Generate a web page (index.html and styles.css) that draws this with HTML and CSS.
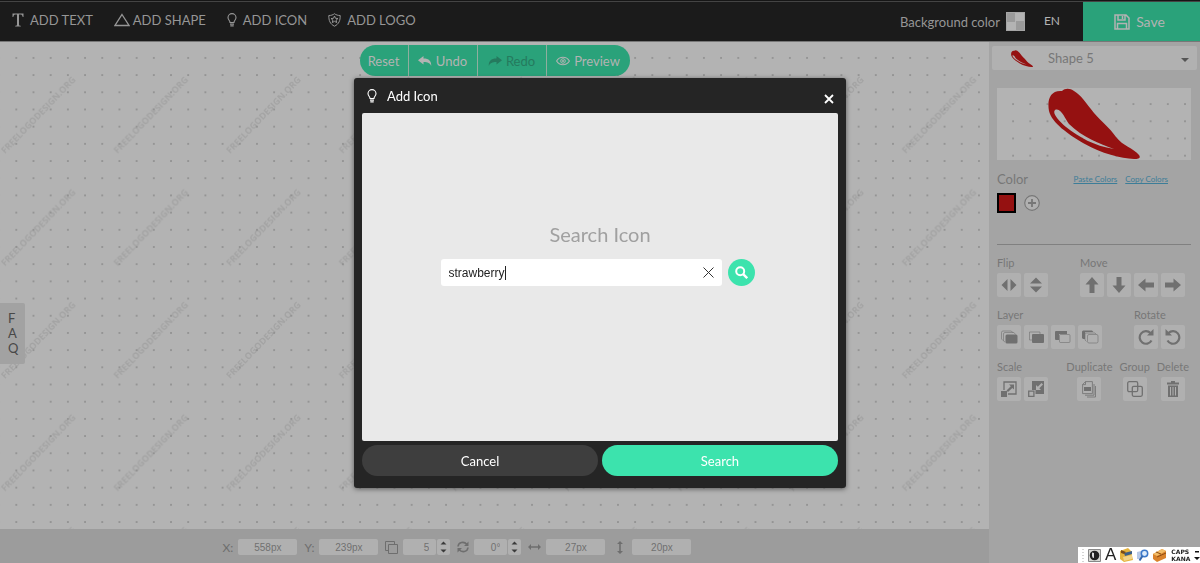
FILE: index.html
```
<!DOCTYPE html>
<html lang="en">
<head>
  <meta charset="UTF-8">
  <meta name="viewport" content="width=device-width, initial-scale=1.0">
  <title>Logo Editor</title>
  <link rel="stylesheet" href="styles.css">
</head>
<body>
  <!-- shared icons -->
  <svg class="defs" width="0" height="0" aria-hidden="true">
    <symbol id="bulb" viewBox="0 0 10 14">
      <path d="M3 9.500C3 7.500 1 7 1 4.600a4 4 0 0 1 8 0C9 7 7 7.500 7 9.500z" fill="none" stroke="currentColor" stroke-width="1.100"/>
      <path d="M3 11.200h4M3.300 12.800h3.400" stroke="currentColor" stroke-width="1.300"/>
    </symbol>
    <symbol id="pepper" viewBox="0 0 92 71">
      <path fill="#951111" fill-rule="evenodd" d="M14 3C17 0 22 0 26 3C33 7 38 15 46 25C54 34 61 39 68 49C75 58 85 60 91 67C93 70 91 71 86 71C73 70 54 66 35 55C20 46 4 35 1 23C-1 12 2 2 14 3zM7 22C4 25 10 32 18 39C31 49 46 58 66 61C52 56 34 49 21 36C17 31 13 19 7 22z"/>
    </symbol>
    <symbol id="arrow" viewBox="0 0 16 16">
      <path fill="currentColor" d="M8 0l6.500 7.500h-4V16h-5V7.500h-4z"/>
    </symbol>
    <symbol id="turn" viewBox="0 0 16 16">
      <path d="M13.500 11.500A6.300 6.300 0 1 1 12.500 4" fill="none" stroke="currentColor" stroke-width="2.200"/>
      <path fill="currentColor" d="M15.500 0v6.500H9z"/>
    </symbol>
    <symbol id="reply" viewBox="0 0 14 10">
      <path fill="currentColor" d="M0 4.200L5.500 0v2.500C11 2.500 13.500 5 13.200 10C12 7 10 6 5.500 6v2.600z"/>
    </symbol>
  </svg>

  <header class="topbar">
    <nav class="add-menu">
      <a href="#text"><svg width="12" height="14" viewBox="0 0 12 14"><path fill="currentColor" d="M.500.500h11v3.500h-.800C10.300 2 9.600 1.500 8.300 1.500H7v10c0 1 .4 1.200 1.800 1.300v.7H3.200v-.7C4.600 12.700 5 12.500 5 11.500v-10H3.700C2.400 1.500 1.700 2 1.300 4H.5z"/></svg>ADD TEXT</a>
      <a href="#shape" class="shape-link"><svg width="16" height="14" viewBox="0 0 16 14"><path d="M8 1.500L15 12.500H1z" fill="none" stroke="currentColor" stroke-width="1.300"/></svg>ADD SHAPE</a>
      <a href="#icon"><svg width="10" height="14"><use href="#bulb"/></svg>ADD ICON</a>
      <a href="#logo"><svg width="13" height="14" viewBox="0 0 13 14"><path d="M6.500.700C5 2 3 2.500.800 2.500C.700 7.500 2 11 6.500 13.200C11 11 12.300 7.500 12.200 2.500C10 2.500 8 2 6.500.700z" fill="none" stroke="currentColor"/><path d="M6.500 3l1 2.300 2.500.2-1.900 1.600.6 2.500-2.200-1.300-2.200 1.300.6-2.500L3 5.500l2.500-.2z" fill="none" stroke="currentColor"/></svg>ADD LOGO</a>
    </nav>
    <div class="top-right">
      <label for="bgColor">Background color</label>
      <button class="bg-swatch" id="bgColor" aria-label="Background color"></button>
      <a href="#lang" class="lang">EN</a>
      <button class="save-btn"><svg width="16" height="16" viewBox="0 0 16 16"><path d="M1 1h11l3 3v11H1zM4 1v5h7V1M3.500 15V9.500h9V15M8.500 2v3" fill="none" stroke="currentColor" stroke-width="1.500"/></svg>Save</button>
    </div>
  </header>

  <main class="editor">
    <section class="workspace">
      <div class="canvas">
        <svg class="grid" width="100%" height="100%" aria-hidden="true">
          <pattern id="dots" x="7.700" y="7.300" width="17.190" height="17.190" patternUnits="userSpaceOnUse">
            <circle cx="8.600" cy="8.600" r="1" fill="#8c8c8c"/>
          </pattern>
          <pattern id="marks" x="-10" y="25" width="112.600" height="112.600" patternUnits="userSpaceOnUse">
            <text class="mark" transform="translate(15 87) rotate(-46)">FREELOGODESIGN.ORG</text>
          </pattern>
          <rect width="100%" height="100%" fill="url(#marks)"/>
          <rect width="100%" height="100%" fill="url(#dots)"/>
        </svg>
        <div class="history">
          <button>Reset</button>
          <button><svg width="14" height="10"><use href="#reply"/></svg>Undo</button>
          <button disabled><svg class="mirror" width="14" height="10"><use href="#reply"/></svg>Redo</button>
          <button><svg width="14" height="10" viewBox="0 0 14 10"><path d="M.600 5C3.500 0 10.500 0 13.400 5C10.500 10 3.500 10 .600 5z" fill="none" stroke="currentColor" stroke-width="1.100"/><circle cx="7" cy="5" r="2.300" fill="none" stroke="currentColor"/><circle cx="7" cy="5" r="1" fill="currentColor"/></svg>Preview</button>
        </div>
        <a href="#faq" class="faq"><span>F</span><span>A</span><span>Q</span></a>
      </div>

      <form class="position-bar">
        <label for="posX">X:</label>
        <input type="text" id="posX" value="558px">
        <label for="posY">Y:</label>
        <input type="text" id="posY" value="239px">
        <label for="corner" aria-label="Layer order"><svg width="13" height="13" viewBox="0 0 13 13"><path d="M3.500 3.500h9v9h-9zM3 9.500H.500v-9h9V3" fill="none" stroke="currentColor"/></svg></label>
        <span class="stepper">
          <input type="text" id="corner" value="5">
          <svg width="13" height="16" viewBox="0 0 13 16"><path fill="#3a3a3a" d="M6.500 2.500l3 3h-6zM6.500 13.500l-3-3h6z"/></svg>
        </span>
        <label for="angle" aria-label="Angle"><svg width="12" height="12" viewBox="0 0 12 12"><path d="M1 5.500C1.500 1 7 0 10 3.500M11 6.500C10.500 11 5 12 2 8.500" fill="none" stroke="currentColor" stroke-width="1.600"/><path fill="currentColor" d="M11.500.500v4.500H7zM.500 11.500V7H5z"/></svg></label>
        <span class="stepper">
          <input type="text" id="angle" value="0°">
          <svg width="13" height="16" viewBox="0 0 13 16"><path fill="#3a3a3a" d="M6.500 2.500l3 3h-6zM6.500 13.500l-3-3h6z"/></svg>
        </span>
        <label for="sizeW" aria-label="Width"><svg width="13" height="6" viewBox="0 0 13 6"><path fill="currentColor" d="M0 3l3-3v2.200h7V0l3 3-3 3V3.800H3V6z"/></svg></label>
        <input type="text" id="sizeW" value="27px">
        <label for="sizeH" class="height-label" aria-label="Height"><svg width="6" height="13" viewBox="0 0 6 13"><path fill="currentColor" d="M3 0l3 3H3.800v7H6l-3 3-3-3h2.200V3H0z"/></svg></label>
        <input type="text" id="sizeH" value="20px">
      </form>
    </section>

    <aside class="panel">
      <div class="shape-picker">
        <svg class="thumb" width="22" height="17"><use href="#pepper"/></svg>
        <select aria-label="Shape">
          <option>Shape 5</option>
        </select>
        <svg class="caret" width="8" height="4" viewBox="0 0 8 4"><path fill="#555" d="M0 0h8L4 4z"/></svg>
      </div>

      <div class="panel-body">
        <div class="preview">
          <svg width="100%" height="72" aria-hidden="true">
            <pattern id="previewDots" x="7.500" y="7.500" width="17.190" height="17.190" patternUnits="userSpaceOnUse">
              <circle cx="8.600" cy="8.600" r="1" fill="#8c8c8c"/>
            </pattern>
            <rect width="100%" height="100%" fill="url(#previewDots)"/>
            <use href="#pepper" x="51" y="0" width="92" height="71"/>
          </svg>
        </div>

        <div class="color-head">
          <h2>Color</h2>
          <a href="#paste">Paste Colors</a>
          <a href="#copy">Copy Colors</a>
        </div>
        <div class="swatches">
          <button class="swatch" aria-label="Red"></button>
          <button class="add-color" aria-label="Add color"><svg width="16" height="16" viewBox="0 0 16 16"><circle cx="8" cy="8" r="7.300" fill="none" stroke="currentColor" stroke-width="1.200"/><path d="M8 4v8M4 8h8" stroke="currentColor" stroke-width="1.800"/></svg></button>
        </div>
        <hr>

        <div class="tool-row">
          <div class="tools">
            <h3>Flip</h3>
            <div class="tool-buttons">
              <button aria-label="Flip horizontal"><svg width="16" height="16" viewBox="0 0 16 16"><path fill="currentColor" d="M6.500 2v12L.500 8zM9.500 2v12l6-6z"/></svg></button>
              <button aria-label="Flip vertical"><svg width="16" height="16" viewBox="0 0 16 16"><path fill="currentColor" d="M2 6.500h12L8 .500zM2 9.500h12l-6 6z"/></svg></button>
            </div>
          </div>
          <div class="tools">
            <h3>Move</h3>
            <div class="tool-buttons">
              <button aria-label="Move up"><svg width="16" height="16"><use href="#arrow"/></svg></button>
              <button aria-label="Move down"><svg class="down" width="16" height="16"><use href="#arrow"/></svg></button>
              <button aria-label="Move left"><svg class="left" width="16" height="16"><use href="#arrow"/></svg></button>
              <button aria-label="Move right"><svg class="right" width="16" height="16"><use href="#arrow"/></svg></button>
            </div>
          </div>
        </div>

        <div class="tool-row">
          <div class="tools">
            <h3>Layer</h3>
            <div class="tool-buttons">
              <button aria-label="Bring to front"><svg width="18" height="14" viewBox="0 0 18 14"><path d="M3 10.500L1.500 9V2.500Q1.500 1 3 1h8l2 1.500M5 12l-1.500-1V4Q3.500 2.500 5 2.500h9l1.500 2" fill="none" stroke="currentColor" stroke-width=".6"/><rect x="5.500" y="4.500" width="12" height="9" rx="1.500" fill="currentColor"/></svg></button>
              <button aria-label="Bring forward"><svg width="16" height="12" viewBox="0 0 16 12"><path d="M4 9H1.500V1H12v2" fill="none" stroke="currentColor" stroke-width=".6"/><rect x="4" y="3" width="12" height="9" rx="1" fill="currentColor"/></svg></button>
              <button aria-label="Send backward"><svg width="16" height="12" viewBox="0 0 16 12"><path fill="currentColor" d="M0 1Q0 0 1 0h11v3H4v6H1Q0 9 0 8z"/><rect x="4.500" y="3.500" width="10.500" height="8" rx="1" fill="none" stroke="currentColor" stroke-width=".6"/></svg></button>
              <button aria-label="Send to back"><svg width="18" height="14" viewBox="0 0 18 14"><path fill="currentColor" d="M1 1.500L2 .500h9l1.500 1.500H4v7H2L1 8z"/><path d="M5.500 11.500L4 10V3h10l1.500 1.500" fill="none" stroke="currentColor" stroke-width=".6"/><rect x="6.500" y="4.500" width="10.500" height="8.500" rx="1.500" fill="none" stroke="currentColor" stroke-width=".6"/></svg></button>
            </div>
          </div>
          <div class="tools">
            <h3>Rotate</h3>
            <div class="tool-buttons">
              <button aria-label="Rotate right"><svg width="16" height="16"><use href="#turn"/></svg></button>
              <button aria-label="Rotate left"><svg class="mirror" width="16" height="16"><use href="#turn"/></svg></button>
            </div>
          </div>
        </div>

        <div class="tool-row last">
          <div class="tools">
            <h3>Scale</h3>
            <div class="tool-buttons">
              <button aria-label="Scale up"><svg width="16" height="16" viewBox="0 0 16 16"><path d="M3 9V1h12v12H7" fill="none" stroke="currentColor" stroke-width="1.300"/><path fill="currentColor" d="M0 10h6v6H0zM8 3.500h5v5L11.300 7 7 11 5.500 9.500l4.300-4.300z"/></svg></button>
              <button aria-label="Scale down"><svg width="16" height="16" viewBox="0 0 16 16"><path fill="currentColor" fill-rule="evenodd" d="M4 0h12v13H7.500V9H4zM13.500 2L9.800 5.700 8 4v5h5l-1.700-1.700L15 3.500z"/><path d="M.700 10.200h5.200v5.200H.700z" fill="none" stroke="currentColor" stroke-width="1.300"/></svg></button>
            </div>
          </div>
          <div class="tools centered push">
            <h3>Duplicate</h3>
            <button aria-label="Duplicate"><svg width="14" height="17" viewBox="0 0 14 17"><path d="M3.500.600h6.900v12H.600V3.500zM3.500.600v3H.600M12 3v11.200H3M13.500 5v11H5" fill="none" stroke="currentColor" stroke-width=".8"/><path fill="currentColor" d="M2 6h7v4H2z"/></svg></button>
          </div>
          <div class="tools centered">
            <h3>Group</h3>
            <button aria-label="Group"><svg width="16" height="16" viewBox="0 0 16 16"><rect x=".700" y=".700" width="10" height="10" rx="1.500" fill="none" stroke="currentColor" stroke-width="1.300"/><rect x="5.300" y="5.300" width="10" height="10" rx="1.500" fill="none" stroke="currentColor" stroke-width="1.300"/></svg></button>
          </div>
          <div class="tools centered">
            <h3>Delete</h3>
            <button aria-label="Delete"><svg width="12" height="16" viewBox="0 0 12 16"><path fill="currentColor" fill-rule="evenodd" d="M4 1.500V0h4v1.500h4v2H0v-2zM1 4.500h10V16H1zM3 6v8.500h1V6zm2.500 0v8.500h1V6zM8 6v8.500h1V6z"/></svg></button>
          </div>
        </div>
      </div>
    </aside>
  </main>

  <div class="overlay">
    <form class="dialog" role="dialog" aria-labelledby="dialogTitle">
      <div class="dialog-head">
        <svg width="10" height="14"><use href="#bulb"/></svg>
        <h1 id="dialogTitle">Add Icon</h1>
        <button type="button" class="close-btn" aria-label="Close"><svg width="10" height="10" viewBox="0 0 10 10"><path d="M1 1l8 8M9 1L1 9" stroke="currentColor" stroke-width="1.800"/></svg></button>
      </div>
      <div class="dialog-body">
        <label for="iconSearch">Search Icon</label>
        <div class="search-line">
          <div class="search-field">
            <input type="text" id="iconSearch" value="strawberry" autofocus>
            <span class="text-caret"></span>
            <button type="button" class="clear-btn" aria-label="Clear"><svg width="11" height="11" viewBox="0 0 11 11"><path d="M.500.500l10 10M10.500.500l-10 10" stroke="currentColor"/></svg></button>
          </div>
          <button type="submit" class="go-btn" aria-label="Search icons"><svg width="13" height="13" viewBox="0 0 13 13"><circle cx="5.200" cy="5.200" r="4" fill="none" stroke="currentColor" stroke-width="2"/><path d="M8.200 8.200l4 4" stroke="currentColor" stroke-width="2.400"/></svg></button>
        </div>
      </div>
      <div class="dialog-actions">
        <button type="button" class="cancel-btn">Cancel</button>
        <button type="submit" class="search-btn">Search</button>
      </div>
    </form>
  </div>

  <!-- language bar -->
  <div class="ime-bar">
    <svg class="grip" width="2" height="14" viewBox="0 0 2 14"><path d="M1 1v13" stroke="#aaa" stroke-dasharray="1 2"/></svg>
    <svg width="13" height="13" viewBox="0 0 13 13"><path fill="#d8d8d4" stroke="#888" d="M.500.500h12v12H.500z"/><circle cx="6.500" cy="6.500" r="4.800" fill="#222"/><path d="M4 3.500v3Q4 9 6 9V4z" fill="#ddd"/></svg>
    <span class="ime-mode">A</span>
    <svg width="13" height="14" viewBox="0 0 13 14"><path fill="#e5b33c" d="M0 3l8-3 3 3 2 9-9 2-4-3z"/><path fill="#3b5f87" d="M4 5l8-2v3L5 8z"/><path fill="#7a4d19" d="M1 2l5 2-2 2-3-1z"/><path fill="#f2d488" d="M3 9l9-2v4l-8 2z"/></svg>
    <svg width="12" height="13" viewBox="0 0 12 13"><path fill="#b8c9e4" d="M0 3l4-1v8H0z"/><circle cx="7.500" cy="4.500" r="3.200" fill="#dcebfa" stroke="#3b78c9" stroke-width="1.500"/><path d="M5.500 7l-3 4.500" stroke="#3266ad" stroke-width="2"/></svg>
    <svg width="14" height="14" viewBox="0 0 14 14"><path fill="#d9822b" d="M0 6l9-5 4 2v7l-9 4-4-3z"/><path fill="#f3bd67" d="M0 6l9-5 4 2-9 5z"/><path d="M4 9l9-4M3 4l5 2" stroke="#8d4c12"/></svg>
    <span class="ime-keys"><span>CAPS</span><span>KANA</span></span>
    <svg width="6" height="12" viewBox="0 0 6 12"><path fill="#111" d="M1 2h4v1.500H1zM0 8h6l-3 3z"/></svg>
  </div>

  <script>
    document.querySelector('.clear-btn').addEventListener('click', () => {
      const search = document.getElementById('iconSearch');
      search.value = '';
      search.focus();
    });
  </script>
</body>
</html>
```
FILE: styles.css
```
* {
  box-sizing: border-box;
}

body {
  margin: 0;
  height: 100vh;
  display: flex;
  flex-direction: column;
  overflow: hidden;
  font-family: Lato, 'Liberation Sans', sans-serif;
  font-size: 13px;
  background: #b3b3b3;
}

svg {
  display: block;
  flex: none;
}

.defs {
  position: absolute;
}

button,
input,
select {
  font-family: inherit;
  font-size: inherit;
  border: none;
  margin: 0;
  padding: 0;
}

button {
  cursor: pointer;
}

h1,
h2,
h3 {
  margin: 0;
  font-weight: normal;
}

.mirror {
  transform: scaleX(-1);
}

/* Top bar */
.topbar {
  display: flex;
  justify-content: space-between;
  flex: none;
  height: 41px;
  margin-top: 1px;
  border-top: 1px solid #444;
  border-bottom: 1px solid #777;
  background: #1b1b1b;
  color: #969696;
  box-shadow: 0 -1px #161616;
}

.add-menu {
  display: flex;
  align-items: center;
  gap: 21px;
  padding: 0 12px 3px;
}

.add-menu a {
  display: flex;
  align-items: center;
  gap: 6px;
  color: inherit;
  text-decoration: none;
}

.add-menu .shape-link {
  gap: 3px;
}

.top-right {
  display: flex;
  align-items: center;
}

.bg-swatch {
  width: 19px;
  height: 19px;
  margin: 0 19px 0 6px;
  border: 1px solid #a5a5a5;
  background: conic-gradient(#b3b3b3 25%, #9a9a9a 0 50%, #b3b3b3 0 75%, #9a9a9a 0);
}

.lang {
  margin-right: 23px;
  padding-bottom: 3px;
  font-size: 12px;
  color: #b3b3b3;
  text-decoration: none;
}

.save-btn {
  display: flex;
  align-items: center;
  justify-content: center;
  gap: 6px;
  align-self: stretch;
  width: 117px;
  padding-right: 4px;
  background: #2aa27a;
  color: #b3b3b3;
  font-size: 14px;
}

/* Editor */
.editor {
  display: flex;
  flex: 1;
  min-height: 0;
}

.workspace {
  flex: 1;
  display: flex;
  flex-direction: column;
}

.canvas {
  position: relative;
  flex: 1;
  padding-top: 3px;
}

.grid {
  position: absolute;
  inset: 0;
}

.mark {
  font-family: 'Open Sans', sans-serif;
  font-size: 9px;
  font-weight: 700;
  fill: #a3a3a3;
}

.history {
  position: relative;
  display: flex;
  width: max-content;
  height: 31px;
  margin: 0 auto;
  border-radius: 16px;
  overflow: hidden;
}

.history button {
  display: flex;
  align-items: center;
  justify-content: center;
  gap: 4px;
  width: 69px;
  background: #2aa27a;
  color: #b3b3b3;
  font-size: 13px;
}

.history button + button {
  border-left: 1px solid #8fae9f;
}

.history button:first-child {
  width: 48px;
}

.history button:last-child {
  width: 84px;
}

.history button:disabled {
  color: #257a5e;
}

.faq {
  position: absolute;
  left: 0;
  top: 261px;
  display: flex;
  flex-direction: column;
  width: 25px;
  padding: 8px;
  border-radius: 0 2px 2px 0;
  background: #a2a2a2;
  color: #484848;
  font-size: 13px;
  line-height: 15px;
  text-decoration: none;
}

/* Bottom bar */
.position-bar {
  display: flex;
  align-items: center;
  justify-content: center;
  gap: 5px;
  height: 34px;
  padding: 2px 77px 0 0;
  background: #9c9c9c;
  color: #6e6e6e;
  font-size: 12px;
}

.position-bar input {
  width: 59px;
  height: 16px;
  border-radius: 2px;
  background: #b0b0b0;
  color: #707070;
  font-family: 'Liberation Sans', Arial, sans-serif;
  font-size: 10px;
  text-align: center;
}

.position-bar label {
  margin-left: 2px;
}

.position-bar .height-label {
  margin: 0 4px 0 7px;
}

.stepper {
  display: flex;
  gap: 1px;
}

.position-bar .stepper input {
  width: 33px;
  padding-right: 7px;
  text-align: right;
}

.stepper svg {
  border-radius: 2px;
  background: #b0b0b0;
}

/* Side panel */
.panel {
  width: 211px;
  padding: 4px 3px;
  background: #a4a4a4;
  color: #777;
}

.shape-picker {
  position: relative;
}

.shape-picker select {
  appearance: none;
  display: block;
  width: 100%;
  height: 24px;
  padding-left: 56px;
  border-radius: 2px;
  background: #b1b1b1;
  color: #777;
  font-size: 13px;
}

.thumb {
  position: absolute;
  left: 19px;
  top: 4px;
}

.caret {
  position: absolute;
  right: 8px;
  top: 12px;
}

.panel-body {
  padding: 18px 6px 0 5px;
}

.preview {
  background: #b3b3b3;
}

.color-head {
  display: flex;
  align-items: center;
  gap: 8px;
  margin: 10px 23px 5px 0;
  line-height: 18px;
}

.color-head h2 {
  margin-right: auto;
  font-size: 13px;
}

.color-head a {
  font-size: 8px;
  color: #3c7d98;
}

.swatches {
  display: flex;
  align-items: center;
  gap: 8px;
}

.swatch {
  width: 19px;
  height: 20px;
  border: 2px solid #000;
  background: #951111;
}

.add-color {
  border-radius: 50%;
  background: #b0b0b0;
  color: #777;
}

.panel hr {
  margin: 31px 0 11px;
  border: none;
  border-top: 1px solid #808080;
}

.tool-row {
  display: flex;
  justify-content: space-between;
  margin-bottom: 11px;
  padding-right: 6px;
}

.tool-row.last {
  padding-right: 2px;
  gap: 7px;
}

.tools h3 {
  margin-bottom: 3px;
  font-size: 11px;
  line-height: 14px;
}

.tool-buttons {
  display: flex;
  gap: 3px;
}

.tools button {
  display: flex;
  align-items: center;
  justify-content: center;
  width: 24px;
  height: 24px;
  border-radius: 2px;
  background: #b0b0b0;
  color: #707070;
}

.centered {
  display: flex;
  flex-direction: column;
  align-items: center;
}

.push {
  margin-left: auto;
}

.down {
  transform: rotate(180deg);
}

.left {
  transform: rotate(-90deg);
}

.right {
  transform: rotate(90deg);
}

/* Dialog */
.overlay {
  position: fixed;
  inset: 0;
  display: flex;
  align-items: flex-start;
  justify-content: center;
  padding-top: 78px;
}

.dialog {
  width: 492px;
  max-width: 100%;
  padding: 0 8px 12px;
  border-radius: 3px;
  background: #252525;
  box-shadow: 0 1px 5px rgba(0, 0, 0, 0.5);
  color: #fff;
}

.dialog-head {
  display: flex;
  align-items: center;
  gap: 10px;
  height: 35px;
  padding: 0 4px 0 5px;
}

.dialog-head h1 {
  font-size: 13px;
}

.close-btn {
  margin-left: auto;
  padding-top: 6px;
  background: none;
  color: #fff;
}

.dialog-body {
  display: flex;
  flex-direction: column;
  align-items: center;
  height: 328px;
  padding-top: 108px;
  border-radius: 2px;
  background: #e9e9e9;
}

.dialog-body label {
  font-size: 20px;
  line-height: 26px;
  color: #a0a0a0;
}

.search-line {
  display: flex;
  gap: 6px;
  margin: 12px 5px 0 0;
}

.search-field {
  display: flex;
  align-items: center;
  width: 281px;
  height: 27px;
  padding: 0 8px;
  border-radius: 3px;
  background: #fff;
}

.search-field input {
  field-sizing: content;
  max-width: 240px;
  outline: none;
  background: none;
  caret-color: transparent;
  color: #222;
  font-family: 'Liberation Sans', Arial, sans-serif;
  font-size: 12px;
}

.text-caret {
  width: 1px;
  height: 14px;
  background: #222;
}

.clear-btn {
  margin-left: auto;
  background: none;
  color: #333;
}

.go-btn {
  display: flex;
  align-items: center;
  justify-content: center;
  width: 27px;
  height: 27px;
  border-radius: 50%;
  background: #3ce3ad;
  color: #fff;
}

.dialog-actions {
  display: flex;
  gap: 4px;
  margin-top: 4px;
}

.dialog-actions button {
  flex: 1;
  height: 31px;
  border-radius: 16px;
  color: #fff;
  font-size: 13px;
}

.dialog-actions .cancel-btn {
  background: #3e3e3e;
}

.dialog-actions .search-btn {
  background: #3ce3ad;
}

/* Language bar */
.ime-bar {
  position: fixed;
  right: 0;
  bottom: 0;
  display: flex;
  align-items: center;
  gap: 4px;
  width: 122px;
  height: 16px;
  padding: 0 4px;
  background: #fff;
  color: #222;
}

.ime-mode {
  font-family: 'Liberation Sans', Arial, sans-serif;
  font-size: 17px;
  line-height: 16px;
}

.ime-keys {
  display: flex;
  flex-direction: column;
  margin-right: auto;
  font-family: 'DejaVu Sans', sans-serif;
  font-size: 6px;
  font-weight: bold;
  line-height: 7px;
}
```
